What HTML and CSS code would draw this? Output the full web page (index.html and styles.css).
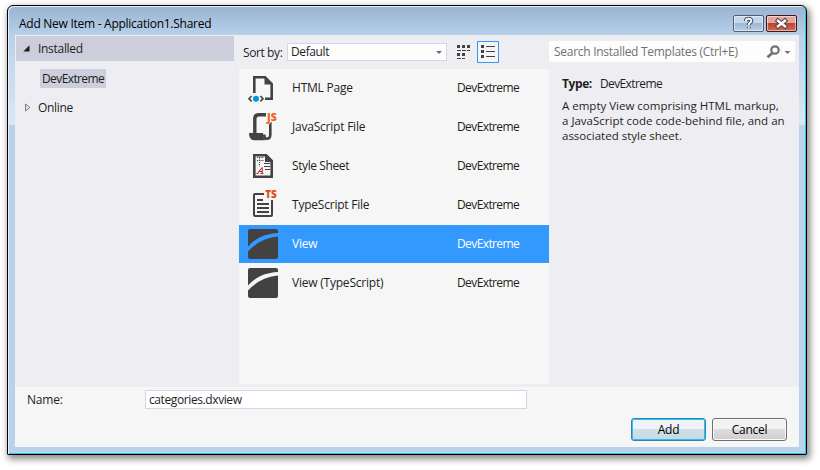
FILE: index.html
```html
<!DOCTYPE html>
<html lang="en">
<head>
<meta charset="utf-8">
<title>Add New Item</title>
<link rel="stylesheet" href="styles.css">
</head>
<body>
<div class="window">
  <header class="titlebar">
    <span class="title">Add New Item - Application1.Shared</span>
    <div class="captions">
      <button class="caption help" aria-label="Help"><svg width="29" height="15" viewBox="0 0 29 15"><path d="M11.8 5.2C12 1.8 18 2 17.3 5.2C17 7 14.7 6.8 14.7 9M14.7 10.7V12.3" fill="none" stroke="#4b5364" stroke-width="4"/><path d="M11.8 5.2C12 1.8 18 2 17.3 5.2C17 7 14.7 6.8 14.7 9M14.7 10.7V12.3" fill="none" stroke="#fff" stroke-width="1.8"/></svg></button>
      <button class="caption close" aria-label="Close"><svg width="29" height="15" viewBox="0 0 29 15"><path d="M11 4.8L18 10.2M18 4.8L11 10.2" stroke="#57434b" stroke-width="4.6" stroke-linecap="square"/><path d="M11 4.8L18 10.2M18 4.8L11 10.2" stroke="#fff" stroke-width="2.4" stroke-linecap="square"/></svg></button>
    </div>
  </header>
  <div class="client">
    <main class="panes">
      <nav class="tree">
        <div class="node root"><svg width="7" height="7"><path d="M6.5 .3V6.5H.3Z" fill="#1e1e1e"/></svg>Installed</div>
        <div class="leaf"><span>DevExtreme</span></div>
        <div class="node online"><svg width="6" height="9"><path d="M.6 1L4.8 4.5L.6 8Z" fill="none" stroke="#777"/></svg>Online</div>
      </nav>
      <section class="templates">
        <div class="toolbar">
          <span class="sort-label">Sort by:</span>
          <div class="combo"><span>Default</span><svg width="6" height="3"><path d="M0 0H6L3 3Z" fill="#717171"/></svg></div>
          <svg class="grid-icon" width="14" height="15" fill="#424242"><path d="M0 0h3v3H0zM5 0h3v3H5zM10 0h3v3h-3zM0 5h4v1H0zM5 5h4v1H5zM10 5h3v1h-3zM0 8h3v3H0zM5 8h3v3H5zM0 13h4v1H0zM5 13h3v1H5z"/></svg>
          <div class="list-view"><svg width="15" height="14" fill="#424242"><path d="M0 0h3v3H0zM5 1h9v1H5zM0 5h3v3H0zM5 6h9v1H5zM0 10h3v3H0zM5 11h9v1H5z"/></svg></div>
        </div>
        <div class="list">
          <div class="row"><svg class="icon" width="30" height="30"><path d="M6.3 20V4.3H17L23.7 11V25.7H17" fill="none" stroke="#424242" stroke-width="2.6"/><path d="M16.5 3L25 11.5H16.5Z" fill="#424242"/><circle cx="8" cy="25.7" r="3" fill="#0096db"/><path d="M3.6 23L1 25.7L3.6 28.4M12.4 23L15 25.7L12.4 28.4" fill="none" stroke="#424242" stroke-width="1.6"/></svg><span class="name">HTML Page</span><span class="category">DevExtreme</span></div>
          <div class="row"><svg class="icon" width="30" height="30"><path d="M18 2.7H10.5Q6.8 2.7 6.8 7V21" fill="none" stroke="#424242" stroke-width="3.4"/><path d="M22.3 10V22.5Q22.3 26.8 18.8 26.8Q16.2 26.8 16.2 22.5" fill="none" stroke="#424242" stroke-width="2.6"/><path d="M1 21H15V24Q15.2 27 18 28.2H6Q1 28 1 21Z" fill="#424242"/><text x="19" y="8.5" class="tag js">JS</text></svg><span class="name">JavaScript File</span><span class="category">DevExtreme</span></div>
          <div class="row"><svg class="icon" width="30" height="30"><path d="M6.3 4.3H18L23.7 10V25.7H6.3Z" fill="#f6f6f6" stroke="#424242" stroke-width="2.6"/><path d="M17 3H18.5L25 9.5V11H17Z" fill="#424242"/><path d="M9 6.5h7M9 9.5h7M11.5 6.5v9" fill="none" stroke="#424242" stroke-dasharray="1.2 1"/><path d="M16 12.5h6M16 15.5h6M17 18.5h5" stroke="#424242"/><path d="M8.5 22.5h2M9.3 22.5L14.2 16.5V22.5M10.8 20.5H14.5M12.5 22.5h3" fill="none" stroke="#bd1e2d"/></svg><span class="name sheet">Style Sheet</span><span class="category">DevExtreme</span></div>
          <div class="row"><svg class="icon" width="30" height="30"><path d="M16 4H7Q6 4 6 5V25Q6 26 7 26H23Q24 26 24 25V10" fill="none" stroke="#424242" stroke-width="2"/><path d="M9 10h6M9 14h12M9 18h12M9 22h12" stroke="#424242" stroke-width="1.8"/><text x="17.2" y="8.3" class="tag ts">TS</text></svg><span class="name">TypeScript File</span><span class="category">DevExtreme</span></div>
          <div class="row selected"><svg class="icon" width="30" height="30"><rect width="30" height="30" rx="2" fill="#424242"/><path d="M0 17.5C7 10 15 5 30 4V7.5C16 9 7 15 0 22.5Z" fill="#3399ff"/></svg><span class="name">View</span><span class="category">DevExtreme</span></div>
          <div class="row"><svg class="icon" width="30" height="30"><rect width="30" height="30" rx="2" fill="#424242"/><path d="M0 17.5C7 10 15 5 30 4V7.5C16 9 7 15 0 22.5Z" fill="#f6f6f6"/></svg><span class="name">View (TypeScript)</span><span class="category">DevExtreme</span></div>
        </div>
      </section>
      <aside class="details">
        <div class="search"><span>Search Installed Templates (Ctrl+E)</span><svg width="25" height="14"><circle cx="9" cy="5" r="3.7" fill="none" stroke="#717171" stroke-width="2.2"/><path d="M6.3 8L1.5 12.3" stroke="#717171" stroke-width="2.8"/><path d="M15.5 0V14" stroke="#f2f2f4"/><path d="M18.5 6H24.5L21.5 9Z" fill="#717171"/></svg></div>
        <p class="type"><b>Type:</b><span class="category">DevExtreme</span></p>
        <p class="description">A empty View comprising HTML markup,<br>a JavaScript code code-behind file, and an<br>associated style sheet.</p>
      </aside>
    </main>
    <footer class="footer">
      <div class="field"><label>Name:</label><div class="input">categories.dxview</div></div>
      <div class="actions"><button class="btn primary">Add</button><button class="btn">Cancel</button></div>
    </footer>
  </div>
</div>
</body>
</html>
```
FILE: styles.css
```css
* { box-sizing: border-box; }
body {
  margin: 0;
  width: 820px;
  height: 470px;
  padding: 5px 13px 15px 7px;
  background: #fff;
  overflow: hidden;
  font: 12px/15px "Open Sans", "Noto Sans", sans-serif;
  letter-spacing: -0.4px;
  color: #1e1e1e;
}
svg { display: block; flex: none; }
button { font: inherit; letter-spacing: inherit; padding: 0; }
p { margin: 0; }
.window {
  width: 800px;
  height: 450px;
  padding: 0 7px;
  border: 1px solid #000;
  border-radius: 6px 6px 1px 1px;
  background: linear-gradient(#98b3d1 0, #b9d1ea 30px, #c8daee 65px, #dbe7f4 118px, #b9d1ea 120px);
  box-shadow: inset 1px 1px #e3effa, inset -1px -1px #33c5dc, 2px 3px 7px 1px rgba(0,0,0,.48);
}
.titlebar { height: 29px; display: flex; justify-content: space-between; padding: 9px 2px 0 4px; }
.title { line-height: 18px; letter-spacing: -0.27px; color: #000; }
.captions { display: flex; gap: 2px; }
.caption { width: 31px; height: 17px; border: 1px solid #4f6176; border-radius: 2px; box-shadow: inset 0 0 0 1px rgba(255,255,255,.5); }
.help { background: linear-gradient(#c4d7eb 48%, #9eb9d5 50%, #b8d0e8); }
.close { border-color: #45151b; background: linear-gradient(#e6a79b 45%, #be4430 50%, #cd6d50); }
.client { height: 412px; background: #f6f6f6; }
.panes { height: 352px; display: flex; background: #eeeef2; }
.tree { width: 224px; padding: 1px 5px 0 1px; }
.node { display: flex; align-items: center; letter-spacing: -0.3px; }
.root { height: 25px; padding-left: 7px; gap: 8px; background: #cccedb; }
.leaf { padding: 8px 0 0 24px; letter-spacing: -0.6px; }
.leaf span { display: block; width: 66px; height: 19px; padding-left: 2px; line-height: 19px; background: #cccedb; }
.online { height: 19px; margin-top: 10px; padding-left: 9px; gap: 7px; }
.templates { width: 310px; }
.toolbar { display: flex; height: 34px; padding-left: 4px; align-items: flex-start; }
.sort-label { width: 44px; padding-top: 10px; }
.combo { width: 160px; height: 18px; margin-top: 8px; padding: 0 4px 0 3px; display: flex; align-items: center; justify-content: space-between; background: #fdfdfd; border: 1px solid #d5d6e3; }
.combo span { line-height: 16px; }
.grid-icon { margin: 10px 0 0 10px; }
.list-view { width: 22px; height: 22px; margin: 6px 0 0 6px; padding: 3px; border: 1px solid #3399ff; background: #f6f6f6; }
.list { height: 315px; background: #f6f6f6; }
.row { height: 38px; margin-bottom: 1px; padding-left: 9px; display: flex; align-items: center; }
.row span { padding-bottom: 2px; }
.icon { margin-right: 14px; overflow: visible; }
.name { width: 165px; letter-spacing: -0.22px; }
.sheet { letter-spacing: -0.4px; }
.category { letter-spacing: -0.6px; }
.selected { background: #3399ff; color: #fff; }
.tag { font-weight: 800; letter-spacing: 0; stroke: #f6f6f6; stroke-width: 1.5px; paint-order: stroke; }
.js { font-size: 10.5px; fill: #f16421; }
.ts { font-size: 10px; fill: #e04e12; }
.details { width: 250px; padding-top: 6px; }
.search { width: 246px; height: 21px; padding: 0 4px 0 5px; display: flex; align-items: center; justify-content: space-between; background: #fdfdfd; color: #717171; letter-spacing: -0.28px; }
.type { display: flex; gap: 8px; padding: 14px 0 0 13px; }
.description { padding: 7px 0 0 13px; white-space: nowrap; font-size: 11.5px; letter-spacing: 0; }
.footer { height: 60px; padding: 3px 12px 0; }
.field { display: flex; line-height: 19px; }
.field label { width: 118px; letter-spacing: -0.2px; }
.input { width: 382px; height: 19px; border: 1px solid #d5d6e3; padding-left: 3px; background: #fff; line-height: 17px; }
.actions { display: flex; justify-content: flex-end; gap: 6px; padding-top: 9px; }
.btn { width: 75px; height: 23px; border: 1px solid #707070; border-radius: 3px; background: linear-gradient(#f2f2f2 48%, #dddddd 50%, #cfcfcf); box-shadow: inset 0 0 0 1px #fafafa; color: #000; letter-spacing: -0.25px; }
.primary { border-color: #3c7fb1; background: linear-gradient(#edf3f6 48%, #d0dfe7 50%, #c8d9e2); box-shadow: inset 0 0 0 1px #20c5f5; }
```
